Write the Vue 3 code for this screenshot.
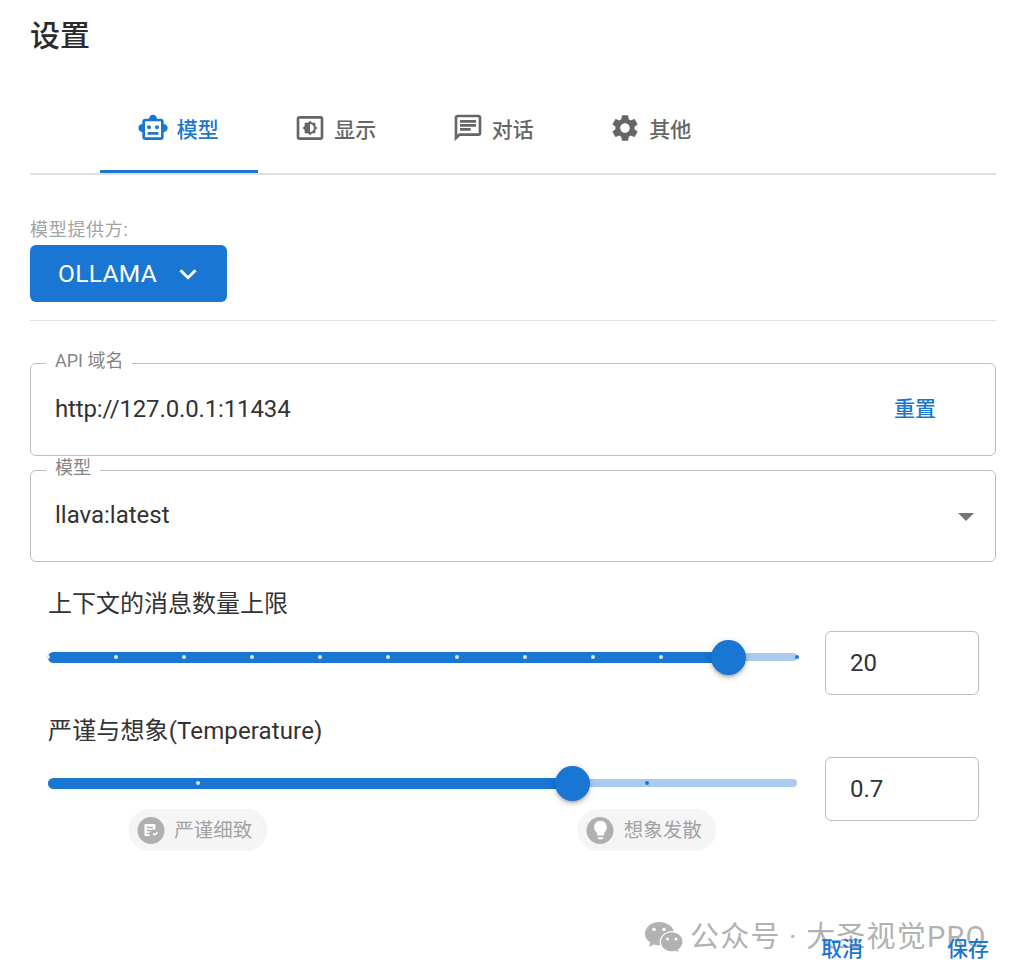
<script setup>
const tabs = [
  { label: '模型', active: true, size: 32, path: 'M20 9V7c0-1.1-.9-2-2-2h-3c0-1.66-1.34-3-3-3S9 3.34 9 5H6c-1.1 0-2 .9-2 2v2c-1.66 0-3 1.34-3 3s1.34 3 3 3v4c0 1.1.9 2 2 2h12c1.1 0 2-.9 2-2v-4c1.66 0 3-1.34 3-3s-1.34-3-3-3zm-2 10H6V7h12v12zm-9-6c-.83 0-1.5-.67-1.5-1.5S8.17 10 9 10s1.5.67 1.5 1.5S9.83 13 9 13zm7.5-1.5c0 .83-.67 1.5-1.5 1.500s-1.5-.67-1.5-1.5.67-1.5 1.5-1.5 1.5.67 1.5 1.5zM8 15h8v2H8v-2z' },
  { label: '显示', size: 32, path: 'M20 3H4c-1.11 0-2 .89-2 2v14c0 1.11.89 2 2 2h16c1.11 0 2-.89 2-2V5c0-1.11-.89-2-2-2zm0 16.02H4V4.98h16v14.04zM8 16h2.5l1.5 1.5 1.5-1.5H16v-2.5l1.5-1.5-1.5-1.5V8h-2.5L12 6.5 10.5 8H8v2.5L6.5 12 8 13.5V16zm4-7c1.66 0 3 1.34 3 3s-1.34 3-3 3V9z' },
  { label: '对话', size: 32, path: 'M20 2H4c-1.1 0-2 .9-2 2v18l4-4h14c1.1 0 2-.9 2-2V4c0-1.1-.9-2-2-2zm0 14H5.17L4 17.17V4h16v12zM6 12h8v2H6zm0-3h12v2H6zm0-3h12v2H6z' },
  { label: '其他', size: 32, path: 'M19.14 12.94c.04-.3.06-.61.06-.94 0-.32-.02-.64-.07-.94l2.03-1.58c.18-.14.23-.41.12-.61l-1.92-3.32c-.12-.22-.37-.29-.59-.22l-2.39.96c-.5-.38-1.03-.7-1.62-.94l-.36-2.54c-.04-.24-.24-.41-.48-.41h-3.84c-.24 0-.43.17-.47.41l-.36 2.54c-.59.24-1.13.57-1.62.94l-2.39-.96c-.22-.08-.47 0-.59.22L2.74 8.87c-.12.21-.08.47.12.61l2.03 1.58c-.05.3-.09.63-.09.94s.02.64.07.94l-2.03 1.58c-.18.14-.23.41-.12.61l1.92 3.32c.12.22.37.29.59.22l2.39-.96c.5.38 1.03.7 1.62.94l.36 2.54c.05.24.24.41.48.41h3.84c.24 0 .44-.17.47-.41l.36-2.54c.59-.24 1.13-.56 1.62-.94l2.39.96c.22.08.47 0 .59-.22l1.92-3.32c.12-.22.07-.47-.12-.61l-2.01-1.58zM12 15.6c-1.98 0-3.6-1.62-3.6-3.6s1.62-3.6 3.6-3.6 3.6 1.62 3.6 3.6-1.62 3.6-3.6 3.6z' }
]

const contextValue = 20
const contextMax = 22
const contextMarks = Array.from({ length: 12 }, (_, i) => i * 2)
const pct = (v, max) => `${(v / max) * 100}%`

const tempValue = 0.7
const tempMarks = [0.2, 0.8]
</script>

<template>
  <div class="page">
    <h1 class="title">设置</h1>

    <nav class="tabs">
      <div v-for="t in tabs" :key="t.label" class="tab" :class="{ active: t.active }">
        <svg class="tab-icon" viewBox="0 0 24 24" :width="t.size" :height="t.size"><path :d="t.path" fill="currentColor" /></svg>
        <span>{{ t.label }}</span>
      </div>
    </nav>

    <div class="provider">
      <div class="provider-label">模型提供方:</div>
      <button class="provider-btn">
        <span>OLLAMA</span>
        <svg viewBox="0 0 24 24" width="34" height="34"><path d="M7.41 8.59 12 13.17l4.59-4.58L18 10l-6 6-6-6z" fill="currentColor" /></svg>
      </button>
    </div>

    <hr class="divider" />

    <div class="field first">
      <span class="legend">API 域名</span>
      <span class="value url">http://127.0.0.1:11434</span>
      <span class="reset">重置</span>
    </div>

    <div class="field second">
      <span class="legend">模型</span>
      <span class="value">llava:latest</span>
      <span class="caret"></span>
    </div>

    <section class="slider-block one">
      <div class="slider-label">上下文的消息数量上限</div>
      <div class="slider-row">
        <div class="slider">
          <div class="rail"></div>
          <div class="track" :style="{ width: pct(contextValue, contextMax) }"></div>
          <i v-for="m in contextMarks" :key="m" class="mark" :class="{ on: m <= contextValue }" :style="{ left: pct(m, contextMax) }"></i>
          <div class="thumb" :style="{ left: pct(contextValue, contextMax) }"></div>
        </div>
        <div class="num">20</div>
      </div>
    </section>

    <section class="slider-block two">
      <div class="slider-label">严谨与想象(Temperature)</div>
      <div class="slider-row">
        <div class="slider-col">
          <div class="slider">
            <div class="rail"></div>
            <div class="track" :style="{ width: pct(tempValue, 1) }"></div>
            <i v-for="m in tempMarks" :key="m" class="mark" :class="{ on: m <= tempValue }" :style="{ left: pct(m, 1) }"></i>
            <div class="thumb" :style="{ left: pct(tempValue, 1) }"></div>
          </div>
          <div class="chips">
            <div class="chip" :style="{ left: pct(0.2, 1) }">
              <span class="chip-icon">
                <svg viewBox="0 0 24 24" width="18" height="18"><path d="M5 4h12.5a1 1 0 0 1 1 1v6.6a6 6 0 0 0-7.4 8.4H5a1 1 0 0 1-1-1V5a1 1 0 0 1 1-1zm2 3.5v2h8.5v-2zm0 4v2h6v-2zm0 4v2h3.5v-2zm7.7 1.6 1.3-1.3 1.600 1.6 3.2-3.2 1.3 1.3-4.500 4.500z" fill="#fff" /></svg>
              </span>
              <span class="chip-text">严谨细致</span>
            </div>
            <div class="chip" :style="{ left: pct(0.8, 1) }">
              <span class="chip-icon">
                <svg viewBox="0 0 24 24" width="22" height="22"><path d="M9 21c0 .55.45 1 1 1h4c.55 0 1-.45 1-1v-1H9v1zm3-19C8.14 2 5 5.14 5 9c0 2.38 1.19 4.47 3 5.74V17c0 .55.45 1 1 1h6c.55 0 1-.45 1-1v-2.26c1.81-1.27 3-3.36 3-5.74 0-3.86-3.14-7-7-7z" fill="#fff" /></svg>
              </span>
              <span class="chip-text">想象发散</span>
            </div>
          </div>
        </div>
        <div class="num">0.7</div>
      </div>
    </section>

    <footer class="actions">
      <span class="action">取消</span>
      <span class="action">保存</span>
    </footer>

    <div class="watermark">
      <svg viewBox="0 0 40 34" width="40" height="34">
        <path d="M15 1C7 1 1 6.300 1 12.600c0 3.700 2 6.800 5.300 9L5 26l4.800-2.600c1.600.5 3.300.8 5.200.8h1.200a10.600 10.600 0 0 1-.5-3.100C15.700 15.100 21.500 10 28.700 10h1.100C28.300 4.800 22.300 1 15 1z" fill="#b2b2b2" />
        <path d="M39 20.800c0-5.600-5.400-10-11.300-10S16.500 15.200 16.500 20.800s5.300 10 11.200 10c1.300 0 2.500-.2 3.700-.6l3.700 2.100-1-3.500c2.900-2.100 4.900-4.900 4.900-8z" fill="#b2b2b2" stroke="#fff" stroke-width="1" />
        <circle cx="10" cy="8.500" r="1.800" fill="#fff" /><circle cx="20" cy="8.500" r="1.800" fill="#fff" />
        <circle cx="23.500" cy="18" r="1.500" fill="#fff" /><circle cx="32" cy="18" r="1.500" fill="#fff" />
      </svg>
      <span class="wm-text">公众号 · 大圣视觉PRO</span>
    </div>
  </div>
</template>

<style>
html, body { background: #fff; }
</style>

<style scoped>
.page {
  position: relative;
  box-sizing: border-box;
  width: 1017px;
  height: 980px;
  padding: 0 21px 0 30px;
  overflow: hidden;
  font-family: Roboto, "Noto Sans CJK SC", sans-serif;
  color: #333;
  background: #fff;
}
.title {
  margin: 0;
  padding-top: 16px;
  font-size: 30px;
  line-height: 40px;
  font-weight: 500;
  color: #2b2b2b;
}
.tabs {
  display: flex;
  margin-top: 30px;
  padding-left: 70px;
  height: 87px;
  border-bottom: 2px solid #e0e0e0;
  box-sizing: content-box;
}
.tab {
  box-sizing: border-box;
  width: 157.500px;
  height: 87px;
  display: flex;
  align-items: center;
  justify-content: center;
  gap: 8px;
  padding: 0 2px 4px 0;
  font-size: 21px;
  font-weight: 500;
  color: #666;
  position: relative;
}
.tab-icon { margin-top: 1px; }
.tab.active { color: #1976d2; }
.tab.active::after {
  content: "";
  position: absolute;
  left: 0;
  right: 0;
  bottom: 0;
  height: 3px;
  background: #1976d2;
}
.provider { margin-top: 42px; }
.provider-label {
  font-size: 18px;
  line-height: 26px;
  letter-spacing: 0.7px;
  color: #a3a3a3;
  margin-bottom: 2px;
}
.provider-btn {
  display: flex;
  align-items: center;
  gap: 14px;
  width: 197px;
  height: 57px;
  padding: 0 0 0 28px;
  border: 0;
  border-radius: 6px;
  background: #1976d2;
  color: #fff;
  font: 400 24.500px Roboto, sans-serif;
  letter-spacing: 0.35px;
}
.divider {
  margin: 18px 0 42px;
  border: 0;
  border-top: 1px solid #e0e0e0;
}
.field {
  position: relative;
  box-sizing: border-box;
  display: flex;
  align-items: center;
  border: 1px solid #bdbdbd;
  border-radius: 6px;
  padding: 0 24px;
  font-size: 24px;
}
.field.first { height: 93px; padding-bottom: 2px; }
.field.second { height: 92px; margin-top: 14px; padding-bottom: 2px; }
.legend {
  position: absolute;
  top: -15px;
  left: 15px;
  padding: 0 9px;
  background: #fff;
  font-size: 18px;
  line-height: 24px;
  color: #858585;
}
.value { flex: 1; }
.url { letter-spacing: -0.14px; }
.reset {
  font-size: 21px;
  font-weight: 500;
  color: #1976d2;
  margin: 0 35px 4px 0;
}
.caret {
  width: 0;
  height: 0;
  border-left: 8px solid transparent;
  border-right: 8px solid transparent;
  border-top: 8px solid #757575;
  margin: 4px -3px 0 0;
}
.slider-block { padding-left: 18px; padding-right: 17px; }
.slider-block.one { margin-top: 24px; }
.slider-block.two { margin-top: 18px; }
.slider-label { font-size: 24px; line-height: 36px; }
.two .slider-label { letter-spacing: 0.13px; }
.slider-row {
  display: flex;
  align-items: flex-start;
  gap: 28px;
  margin-top: 9px;
}
.two .slider-row { margin-top: 8px; }
.slider-col { width: 749px; flex: none; position: relative; height: 100px; }
.slider {
  position: relative;
  flex: none;
  width: 749px;
  height: 52px;
}
.rail {
  position: absolute;
  left: 0;
  right: 0;
  top: 22px;
  height: 8px;
  border-radius: 4px;
  background: #a8cbee;
}
.track {
  position: absolute;
  left: 0;
  top: 20.500px;
  height: 11px;
  border-radius: 6px;
  background: #1976d2;
}
.mark {
  position: absolute;
  top: 24px;
  width: 4px;
  height: 4px;
  margin-left: -2px;
  border-radius: 50%;
  background: #1976d2;
}
.mark.on { background: #d9e9f8; }
.thumb {
  position: absolute;
  top: 8.500px;
  width: 35px;
  height: 35px;
  margin-left: -17.500px;
  border-radius: 50%;
  background: #1976d2;
  box-shadow: 0 3px 3px -2px rgba(0,0,0,.2), 0 3px 4px 0 rgba(0,0,0,.14), 0 1px 8px 0 rgba(0,0,0,.12);
}
.num {
  box-sizing: border-box;
  width: 154px;
  height: 64px;
  flex: none;
  border: 1px solid #bdbdbd;
  border-radius: 6px;
  padding-left: 24px;
  line-height: 62px;
  font-size: 24px;
}
.chips { position: absolute; left: 0; right: 0; top: 52px; height: 42px; }
.chip {
  position: absolute;
  top: 0;
  transform: translateX(-50%);
  display: flex;
  align-items: center;
  gap: 10px;
  height: 42px;
  padding: 0 15px 0 9px;
  border-radius: 21px;
  background: #f5f5f5;
  color: #a3a3a3;
  font-size: 19.500px;
  white-space: nowrap;
}
.chip-text { padding-bottom: 4px; }
.chip-icon {
  width: 27px;
  height: 27px;
  border-radius: 50%;
  background: #b0b0b0;
  display: flex;
  align-items: center;
  justify-content: center;
}
.actions {
  position: absolute;
  right: 28px;
  top: 935px;
  display: flex;
  gap: 84px;
  z-index: 2;
}
.action {
  font-size: 21px;
  line-height: 28px;
  font-weight: 500;
  color: #1976d2;
}
.watermark {
  position: absolute;
  left: 644px;
  top: 920px;
  display: flex;
  align-items: center;
  gap: 6px;
  color: #b2b2b2;
  font-size: 29px;
  line-height: 36px;
  white-space: nowrap;
  letter-spacing: 1.2px;
}
.wm-text { margin-top: -1px; }
</style>
